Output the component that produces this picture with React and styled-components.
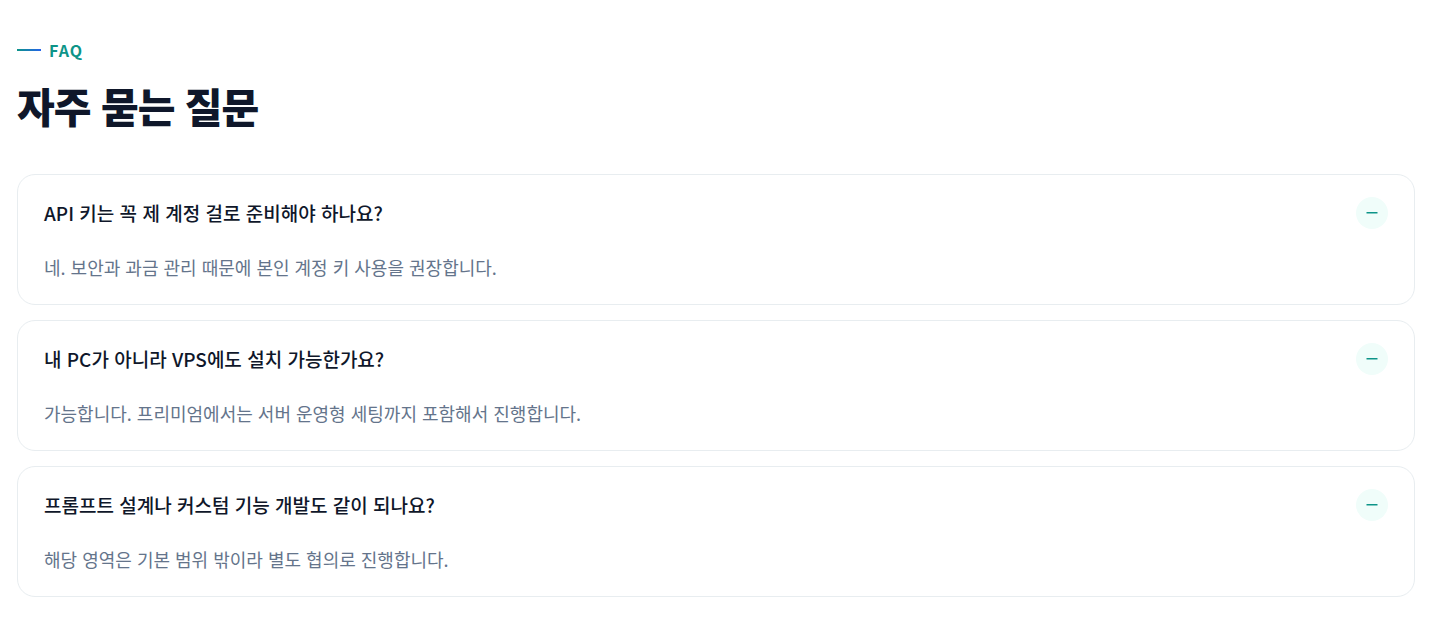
import React, { useState } from "react";
import styled, { createGlobalStyle } from "styled-components";

const GlobalStyle = createGlobalStyle`
  *, *::before, *::after { box-sizing: border-box; }
  body {
    margin: 0;
    background: #ffffff;
    color: #0f172a;
    font-family: "Noto Sans CJK KR", "Noto Sans", sans-serif;
  }
`;

const Section = styled.section`
  padding: 37px 15px 28px 17px;
`;

const Eyebrow = styled.p`
  display: flex;
  align-items: center;
  gap: 8px;
  margin: 0;
  font-size: 16px;
  line-height: 26px;
  font-weight: 700;
  letter-spacing: 1px;
  color: #0d9488;

  &::before {
    content: "";
    width: 24px;
    height: 2px;
    background: linear-gradient(90deg, #0d9488, #2563eb);
  }
`;

const Title = styled.h2`
  margin: 13px 0 40px;
  font-size: 41px;
  line-height: 58px;
  font-weight: 900;
  letter-spacing: -1px;
`;

const List = styled.div`
  display: grid;
  gap: 15px;
`;

const Card = styled.article`
  padding: 22px 26px 21px;
  border: 1px solid #e8edf0;
  border-radius: 18px;
  background: #ffffff;
`;

const Heading = styled.h3`
  margin: 0;
`;

const Question = styled.button`
  display: flex;
  align-items: center;
  justify-content: space-between;
  width: 100%;
  padding: 0;
  border: 0;
  background: none;
  color: inherit;
  font: inherit;
  font-size: 19px;
  line-height: 32px;
  font-weight: 500;
  text-align: left;
  cursor: pointer;
`;

const Toggle = styled.span`
  display: grid;
  place-items: center;
  width: 32px;
  height: 32px;
  border-radius: 50%;
  background: #f0fdfa;
  color: #0d9488;
`;

const Answer = styled.p`
  margin: 22px 0 0;
  font-size: 18px;
  line-height: 32px;
  color: #64748b;
`;

const items = [
  ["API 키는 꼭 제 계정 걸로 준비해야 하나요?", "네. 보안과 과금 관리 때문에 본인 계정 키 사용을 권장합니다."],
  ["내 PC가 아니라 VPS에도 설치 가능한가요?", "가능합니다. 프리미엄에서는 서버 운영형 세팅까지 포함해서 진행합니다."],
  ["프롬프트 설계나 커스텀 기능 개발도 같이 되나요?", "해당 영역은 기본 범위 밖이라 별도 협의로 진행합니다."],
];

function FaqItem({ id, question, answer }) {
  const [open, setOpen] = useState(true);
  return (
    <Card>
      <Heading>
        <Question type="button" aria-expanded={open} aria-controls={id} onClick={() => setOpen(!open)}>
          {question}
          <Toggle aria-hidden="true">
            <svg width="12" height="12" viewBox="0 0 12 12" fill="none" stroke="currentColor" strokeWidth="1.5">
              <path d={open ? "M0.5 5.75H11.5" : "M0.5 5.75H11.5M6 0.5V11.5"} />
            </svg>
          </Toggle>
        </Question>
      </Heading>
      <Answer id={id} hidden={!open}>{answer}</Answer>
    </Card>
  );
}

export default function App() {
  return (
    <Section lang="ko">
      <GlobalStyle />
      <Eyebrow>FAQ</Eyebrow>
      <Title>자주 묻는 질문</Title>
      <List>
        {items.map(([question, answer], i) => (
          <FaqItem key={question} id={`answer-${i}`} question={question} answer={answer} />
        ))}
      </List>
    </Section>
  );
}
